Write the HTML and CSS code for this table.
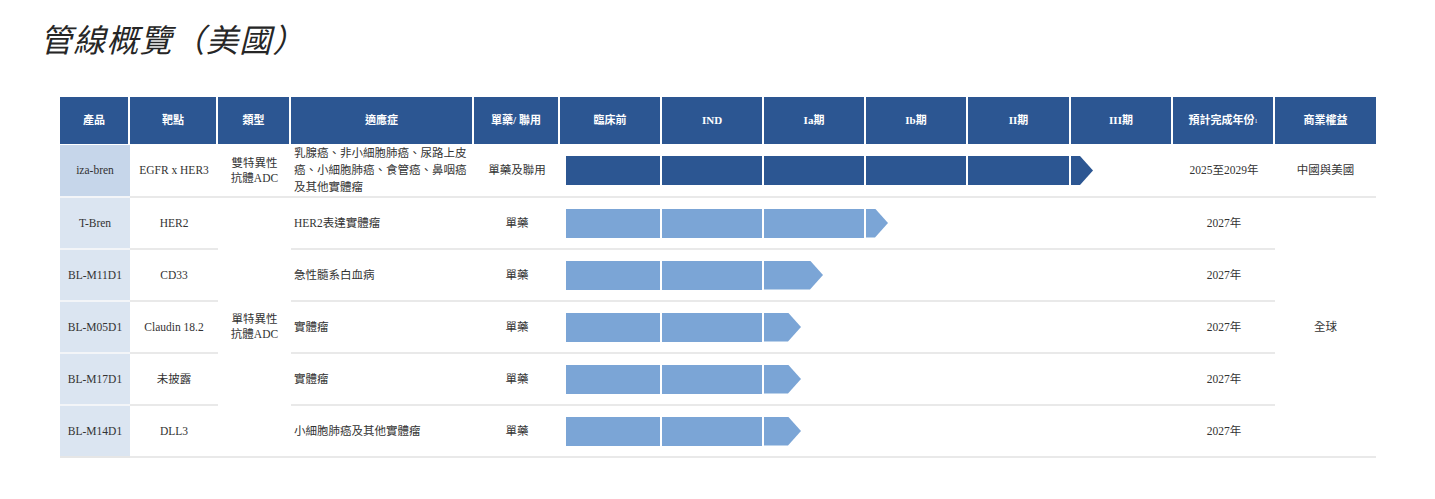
FILE: index.html
```html
<!DOCTYPE html>
<html lang="zh-Hant">
<head>
<meta charset="utf-8">
<title>管線概覽（美國）</title>
<link rel="stylesheet" href="styles.css">
</head>
<body>
<div class="page">
  <h1 class="title">管線概覽（美國）</h1>
  <div class="pipeline">
    <div class="cell head">產品</div>
    <div class="cell head">靶點</div>
    <div class="cell head">類型</div>
    <div class="cell head">適應症</div>
    <div class="cell head">單藥/ 聯用</div>
    <div class="cell head">臨床前</div>
    <div class="cell head">IND</div>
    <div class="cell head">Ia期</div>
    <div class="cell head">Ib期</div>
    <div class="cell head">II期</div>
    <div class="cell head">III期</div>
    <div class="cell head">預計完成年份<sup>1</sup></div>
    <div class="cell head last">商業權益</div>

    <!-- row 1 -->
    <div class="cell product first">iza-bren</div>
    <div class="cell">EGFR x HER3</div>
    <div class="cell">雙特異性<br>抗體ADC</div>
    <div class="cell indication">乳腺癌、非小細胞肺癌、尿路上皮<br>癌、小細胞肺癌、食管癌、鼻咽癌<br>及其他實體瘤</div>
    <div class="cell">單藥及聯用</div>
    <div class="cell stage"><span class="seg dark start"></span></div>
    <div class="cell stage"><span class="seg dark"></span></div>
    <div class="cell stage"><span class="seg dark"></span></div>
    <div class="cell stage"><span class="seg dark"></span></div>
    <div class="cell stage"><span class="seg dark"></span></div>
    <div class="cell stage"><span class="tip dark tip-s"></span></div>
    <div class="cell">2025至2029年</div>
    <div class="cell">中國與美國</div>

    <!-- merged cells -->
    <div class="cell merged type-merged">單特異性<br>抗體ADC</div>
    <div class="cell merged rights-merged">全球</div>

    <!-- row 2 -->
    <div class="cell product">T-Bren</div>
    <div class="cell">HER2</div>
    <div class="cell indication">HER2表達實體瘤</div>
    <div class="cell">單藥</div>
    <div class="cell stage"><span class="seg light start"></span></div>
    <div class="cell stage"><span class="seg light"></span></div>
    <div class="cell stage"><span class="seg light"></span></div>
    <div class="cell stage"><span class="tip light tip-s"></span></div>
    <div class="cell stage"></div>
    <div class="cell stage"></div>
    <div class="cell">2027年</div>

    <!-- row 3 -->
    <div class="cell product">BL-M11D1</div>
    <div class="cell">CD33</div>
    <div class="cell indication">急性髓系白血病</div>
    <div class="cell">單藥</div>
    <div class="cell stage"><span class="seg light start"></span></div>
    <div class="cell stage"><span class="seg light"></span></div>
    <div class="cell stage"><span class="tip light tip-l"></span></div>
    <div class="cell stage"></div>
    <div class="cell stage"></div>
    <div class="cell stage"></div>
    <div class="cell">2027年</div>

    <!-- row 4 -->
    <div class="cell product">BL-M05D1</div>
    <div class="cell">Claudin 18.2</div>
    <div class="cell indication">實體瘤</div>
    <div class="cell">單藥</div>
    <div class="cell stage"><span class="seg light start"></span></div>
    <div class="cell stage"><span class="seg light"></span></div>
    <div class="cell stage"><span class="tip light tip-m"></span></div>
    <div class="cell stage"></div>
    <div class="cell stage"></div>
    <div class="cell stage"></div>
    <div class="cell">2027年</div>

    <!-- row 5 -->
    <div class="cell product">BL-M17D1</div>
    <div class="cell">未披露</div>
    <div class="cell indication">實體瘤</div>
    <div class="cell">單藥</div>
    <div class="cell stage"><span class="seg light start"></span></div>
    <div class="cell stage"><span class="seg light"></span></div>
    <div class="cell stage"><span class="tip light tip-m"></span></div>
    <div class="cell stage"></div>
    <div class="cell stage"></div>
    <div class="cell stage"></div>
    <div class="cell">2027年</div>

    <!-- row 6 -->
    <div class="cell product lastrow">BL-M14D1</div>
    <div class="cell">DLL3</div>
    <div class="cell indication">小細胞肺癌及其他實體瘤</div>
    <div class="cell">單藥</div>
    <div class="cell stage"><span class="seg light start"></span></div>
    <div class="cell stage"><span class="seg light"></span></div>
    <div class="cell stage"><span class="tip light tip-m"></span></div>
    <div class="cell stage"></div>
    <div class="cell stage"></div>
    <div class="cell stage"></div>
    <div class="cell">2027年</div>
  </div>
</div>
</body>
</html>
```

FILE: styles.css
```css
html, body {
  margin: 0;
  padding: 0;
  background: #ffffff;
}

.page {
  padding: 18px 0 0 60px;
  font-family: "Liberation Serif", "Noto Sans CJK TC", serif;
  color: #333333;
}

.title {
  margin: 0 0 39px -20px;
  font-family: "Noto Sans CJK TC", "Noto Sans", sans-serif;
  font-weight: 400;
  font-style: italic;
  font-size: 32px;
  line-height: 40px;
  color: #262626;
  letter-spacing: 1.2px;
}

.pipeline {
  display: grid;
  grid-template-columns: 70px 88px 73px 183px 86px 102px 102px 102px 102px 103px 102px 102px 101px;
  grid-template-rows: 48px 53px repeat(5, 52px);
  width: 1316px;
}

.cell {
  box-sizing: border-box;
  display: flex;
  align-items: center;
  justify-content: center;
  text-align: center;
  font-size: 11.5px;
  line-height: 15px;
  border-bottom: 2px solid #e9e9e9;
}

.head {
  background: #2c5692;
  color: #ffffff;
  font-weight: 700;
  font-size: 11px;
  border-right: 2px solid #ffffff;
  border-bottom: 1px solid #ffffff;
}

.head.last {
  border-right: none;
}

.head sup {
  font-size: 6px;
  line-height: 0;
  vertical-align: 5px;
  font-weight: 400;
}

.product {
  background: #dbe5f1;
  border-bottom: 2px solid #f3f5f8;
}

.product.first {
  background: #c6d6ea;
}

.product.lastrow {
  border-bottom: 2px solid #e6e6e6;
}

.indication {
  justify-content: flex-start;
  text-align: left;
  padding-left: 3px;
  line-height: 17px;
}

.merged {
  border-bottom: 2px solid #e9e9e9;
}

.type-merged {
  grid-column: 3;
  grid-row: 3 / 8;
}

.rights-merged {
  grid-column: 13;
  grid-row: 3 / 8;
}

.stage {
  justify-content: flex-start;
}

.seg {
  display: block;
  height: 29px;
  width: calc(100% - 2px);
}

.seg.start {
  margin-left: 6px;
  width: calc(100% - 8px);
}

.dark {
  background: #2c5692;
}

.light {
  background: #7ba5d6;
}

.tip {
  display: block;
  height: 29px;
  clip-path: polygon(0 0, calc(100% - 13px) 0, 100% 50%, calc(100% - 13px) 100%, 0 100%);
}

.tip-s {
  width: 22px;
}

.tip-m {
  width: 37px;
}

.tip-l {
  width: 59px;
}
```
